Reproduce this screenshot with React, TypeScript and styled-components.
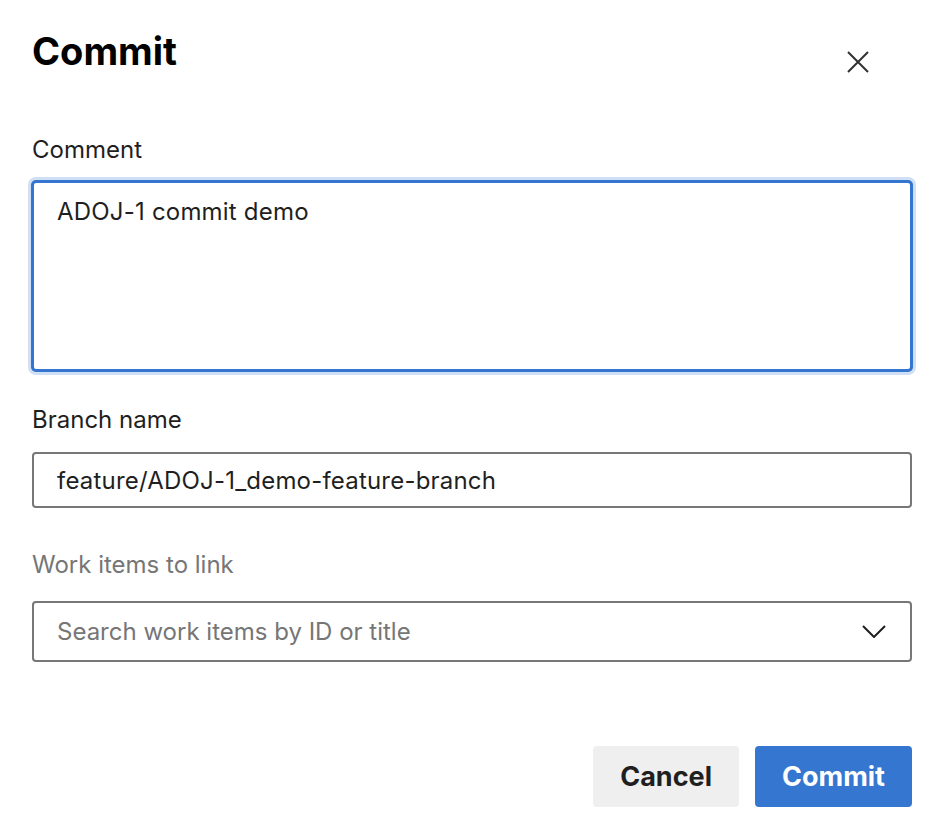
import { FC } from "react"
import styled, { createGlobalStyle } from "styled-components"

const GlobalStyle = createGlobalStyle`
    body {
        margin: 0;
        background: #ffffff;
        font-family: Inter, "Noto Sans", "Liberation Sans", sans-serif;
        color: #1f1f1f;
    }
`

const Dialog = styled.div`
    display: flex;
    flex-direction: column;
    width: 880px;
    padding: 29px 32px 0 32px;
`

const Header = styled.div`
    display: flex;
    justify-content: space-between;
    align-items: flex-start;
`

const Title = styled.h1`
    margin: 0;
    font-size: 38px;
    line-height: 45px;
    font-weight: 700;
    color: #000000;
`

const CloseButton = styled.button`
    display: flex;
    align-items: center;
    justify-content: center;
    width: 40px;
    height: 40px;
    margin: 13px 34px 0 0;
    padding: 0;
    border: none;
    background: transparent;
    color: #323130;
    cursor: pointer;
`

const Label = styled.label<{ $muted?: boolean; $top: number; $gap: number }>`
    display: block;
    margin-top: ${(p) => p.$top}px;
    margin-bottom: ${(p) => p.$gap}px;
    font-size: 24px;
    line-height: 29px;
    color: ${(p) => (p.$muted ? "#767676" : "#1f1f1f")};
`

const TextArea = styled.textarea`
    box-sizing: border-box;
    display: block;
    width: 880px;
    height: 190px;
    margin: 0;
    padding: 14px 23px;
    border: 2px solid #3375cf;
    border-radius: 4px;
    box-shadow: 0 0 0 1px #3375cf, 0 0 0 4px #cfe0f5;
    outline: none;
    resize: none;
    font-family: inherit;
    font-size: 24px;
    line-height: 29px;
    letter-spacing: 0.2px;
    color: #1f1f1f;
`

const TextInput = styled.input`
    box-sizing: border-box;
    display: block;
    width: 880px;
    height: 56px;
    margin: 0;
    padding: 0 23px;
    border: 2px solid #777777;
    border-radius: 4px;
    outline: none;
    font-family: inherit;
    font-size: 24px;
    line-height: 29px;
    letter-spacing: 0.2px;
    color: #1f1f1f;
`

const Select = styled.div`
    box-sizing: border-box;
    display: flex;
    align-items: center;
    justify-content: space-between;
    width: 880px;
    height: 61px;
    padding: 0 24px 0 23px;
    border: 2px solid #777777;
    border-radius: 4px;
    cursor: pointer;
`

const Placeholder = styled.span`
    font-size: 24px;
    line-height: 29px;
    color: #767676;
`

const Footer = styled.div`
    display: flex;
    justify-content: flex-end;
    gap: 16px;
    margin-top: 84px;
`

const Button = styled.button<{ $primary?: boolean }>`
    height: 61px;
    padding: 0 27px;
    border: none;
    border-radius: 4px;
    font-family: inherit;
    font-size: 27px;
    font-weight: 700;
    background: ${(p) => (p.$primary ? "#3577d0" : "#efefef")};
    color: ${(p) => (p.$primary ? "#ffffff" : "#1f1f1f")};
    cursor: pointer;
`

const CloseIcon: FC = () => (
    <svg width="22" height="22" viewBox="0 0 22 22" fill="none">
        <path d="M1 1L21 21M21 1L1 21" stroke="currentColor" strokeWidth="2" />
    </svg>
)

const Chevron: FC = () => (
    <svg width="24" height="13" viewBox="0 0 24 13" fill="none">
        <path d="M1 1L12 12L23 1" stroke="#1f1f1f" strokeWidth="2" />
    </svg>
)

const App = () => {
    return (
        <>
            <GlobalStyle />
            <Dialog>
                <Header>
                    <Title>Commit</Title>
                    <CloseButton aria-label="Close">
                        <CloseIcon />
                    </CloseButton>
                </Header>

                <Label $top={53} $gap={17}>Comment</Label>
                <TextArea defaultValue="ADOJ-1 commit demo" />

                <Label $top={34} $gap={18}>Branch name</Label>
                <TextInput defaultValue="feature/ADOJ-1_demo-feature-branch" />

                <Label $muted $top={42} $gap={22}>Work items to link</Label>
                <Select>
                    <Placeholder>Search work items by ID or title</Placeholder>
                    <Chevron />
                </Select>

                <Footer>
                    <Button>Cancel</Button>
                    <Button $primary>Commit</Button>
                </Footer>
            </Dialog>
        </>
    )
}

export default App
